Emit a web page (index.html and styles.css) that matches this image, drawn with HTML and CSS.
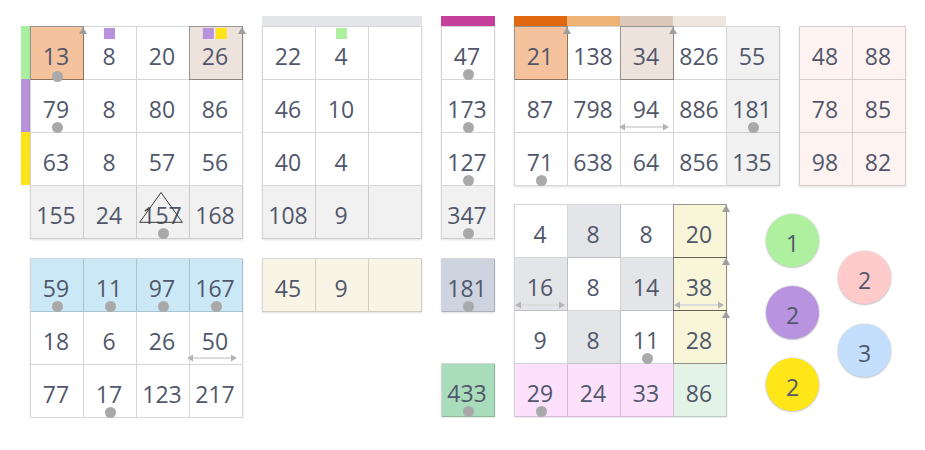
FILE: index.html
```html
<!DOCTYPE html>
<html lang="en">
<head>
<meta charset="utf-8">
<title>Grids</title>
<link rel="stylesheet" href="styles.css">
</head>
<body>
<main class="board">
  <!-- column A -->
  <section class="col">
    <div class="with-strip">
      <div class="strip"><i class="s-green"></i><i class="s-purple"></i><i class="s-yellow"></i></div>
      <div class="grid c4">
        <div class="cell orange hl">13<span class="up"></span><span class="dot low"></span></div>
        <div class="cell">8<span class="tags"><b class="t-purple"></b></span></div>
        <div class="cell">20</div>
        <div class="cell tan hl">26<span class="up"></span><span class="tags"><b class="t-purple"></b><b class="t-yellow"></b></span></div>
        <div class="cell">79<span class="dot"></span></div>
        <div class="cell">8</div>
        <div class="cell">80</div>
        <div class="cell">86</div>
        <div class="cell">63</div>
        <div class="cell">8</div>
        <div class="cell">57</div>
        <div class="cell">56</div>
        <div class="cell total">155</div>
        <div class="cell total">24</div>
        <div class="cell total">157<svg class="warn" viewBox="0 0 44 31" width="44" height="31"><polygon points="22,0.5 0.7,30.3 43.3,30.3" fill="none" stroke="#3a3a3a" stroke-width="1"/></svg><span class="dot"></span></div>
        <div class="cell total">168</div>
      </div>
    </div>
    <div class="grid c4 gap19 indent">
      <div class="cell blue">59<span class="dot"></span></div>
      <div class="cell blue">11<span class="dot"></span></div>
      <div class="cell blue">97<span class="dot"></span></div>
      <div class="cell blue">167<span class="dot"></span></div>
      <div class="cell">18</div>
      <div class="cell">6</div>
      <div class="cell">26</div>
      <div class="cell">50<span class="harr up2"><svg viewBox="0 0 50 8" width="50" height="8"><line x1="5" y1="4" x2="45" y2="4" stroke="#dcdcdc" stroke-width="2"/><polygon points="0,4 6,0.5 6,7.5" fill="#b4b4b4"/><polygon points="50,4 44,0.5 44,7.5" fill="#b4b4b4"/></svg></span></div>
      <div class="cell">77</div>
      <div class="cell">17<span class="dot"></span></div>
      <div class="cell">123</div>
      <div class="cell">217</div>
    </div>
  </section>

  <!-- column B -->
  <section class="col">
    <div class="bar bar-gray w3"></div>
    <div class="grid c3">
      <div class="cell">22</div>
      <div class="cell">4<span class="tags"><b class="t-green"></b></span></div>
      <div class="cell"></div>
      <div class="cell">46</div>
      <div class="cell">10</div>
      <div class="cell"></div>
      <div class="cell">40</div>
      <div class="cell">4</div>
      <div class="cell"></div>
      <div class="cell total">108</div>
      <div class="cell total">9</div>
      <div class="cell total"></div>
    </div>
    <div class="grid c3 gap19">
      <div class="cell beige">45</div>
      <div class="cell beige">9</div>
      <div class="cell beige"></div>
    </div>
  </section>

  <!-- column C -->
  <section class="col">
    <div class="bar bar-magenta w1"></div>
    <div class="grid c1">
      <div class="cell">47<span class="dot"></span></div>
      <div class="cell">173<span class="dot"></span></div>
      <div class="cell">127<span class="dot"></span></div>
      <div class="cell total">347<span class="dot"></span></div>
    </div>
    <div class="grid c1 gap19">
      <div class="cell slate">181<span class="dot"></span></div>
    </div>
    <div class="grid c1 gap51">
      <div class="cell mint">433<span class="dot"></span></div>
    </div>
  </section>

  <!-- column D -->
  <section class="col">
    <div class="bar-row">
      <i class="seg seg-1"></i><i class="seg seg-2"></i><i class="seg seg-3"></i><i class="seg seg-4"></i>
    </div>
    <div class="grid c5">
      <div class="cell orange hl">21<span class="up"></span></div>
      <div class="cell">138</div>
      <div class="cell tan hl">34<span class="up"></span></div>
      <div class="cell">826</div>
      <div class="cell total">55</div>
      <div class="cell">87</div>
      <div class="cell">798</div>
      <div class="cell">94<span class="harr up3"><svg viewBox="0 0 50 8" width="50" height="8"><line x1="5" y1="4" x2="45" y2="4" stroke="#dcdcdc" stroke-width="2"/><polygon points="0,4 6,0.5 6,7.5" fill="#b4b4b4"/><polygon points="50,4 44,0.5 44,7.5" fill="#b4b4b4"/></svg></span></div>
      <div class="cell">886</div>
      <div class="cell total">181<span class="dot"></span></div>
      <div class="cell">71<span class="dot"></span></div>
      <div class="cell">638</div>
      <div class="cell">64</div>
      <div class="cell">856</div>
      <div class="cell total">135</div>
    </div>
    <div class="grid c4 gap18">
      <div class="cell">4</div>
      <div class="cell shade">8</div>
      <div class="cell">8</div>
      <div class="cell cream hl">20<span class="up"></span></div>
      <div class="cell shade">16<span class="harr"><svg viewBox="0 0 50 8" width="50" height="8"><line x1="5" y1="4" x2="45" y2="4" stroke="#dcdcdc" stroke-width="2"/><polygon points="0,4 6,0.5 6,7.5" fill="#b4b4b4"/><polygon points="50,4 44,0.5 44,7.5" fill="#b4b4b4"/></svg></span></div>
      <div class="cell">8</div>
      <div class="cell shade">14</div>
      <div class="cell cream hl">38<span class="up"></span><span class="harr"><svg viewBox="0 0 50 8" width="50" height="8"><line x1="5" y1="4" x2="45" y2="4" stroke="#dcdcdc" stroke-width="2"/><polygon points="0,4 6,0.5 6,7.5" fill="#b4b4b4"/><polygon points="50,4 44,0.5 44,7.5" fill="#b4b4b4"/></svg></span></div>
      <div class="cell">9</div>
      <div class="cell shade">8</div>
      <div class="cell">11<span class="dot"></span></div>
      <div class="cell cream hl">28<span class="up"></span></div>
      <div class="cell pink">29<span class="dot"></span><span class="foot"></span></div>
      <div class="cell pink">24<span class="foot"></span></div>
      <div class="cell pink">33<span class="foot"></span></div>
      <div class="cell sage">86</div>
    </div>
  </section>

  <!-- column E -->
  <section class="col">
    <div class="grid c2 rosy top10">
      <div class="cell">48</div>
      <div class="cell">88</div>
      <div class="cell">78</div>
      <div class="cell">85</div>
      <div class="cell">98</div>
      <div class="cell">82</div>
    </div>
    <div class="tray">
      <div class="lane">
        <div class="disc d-green">1</div>
        <div class="disc d-purple">2</div>
        <div class="disc d-yellow">2</div>
      </div>
      <div class="lane lane-r">
        <div class="disc d-pink">2</div>
        <div class="disc d-blue">3</div>
      </div>
    </div>
  </section>
</main>
</body>
</html>
```

FILE: styles.css
```css
html, body {
  margin: 0;
  background: #ffffff;
}

body {
  font-family: "Open Sans", "Noto Sans", "DejaVu Sans", sans-serif;
  font-weight: 400;
  color: #50576a;
}

.board {
  display: flex;
  align-items: flex-start;
  gap: 19px;
  padding: 16px 0 0 21px;
}

.col {
  display: flex;
  flex-direction: column;
  align-items: flex-start;
}

.with-strip {
  display: flex;
  align-items: flex-start;
  margin-top: 10px;
}

.strip {
  width: 9px;
  display: flex;
  flex-direction: column;
}

.strip i {
  display: block;
  height: 53px;
}

.s-green { background: #a9ef9f; }
.s-purple { background: #b992dd; }
.s-yellow { background: #ffe41a; }

.indent { margin-left: 9px; }
.top10 { margin-top: 10px; }
.gap19 { margin-top: 19px; }
.gap18 { margin-top: 18px; }
.gap51 { margin-top: 51px; }

/* header bars */
.bar { height: 10px; }
.bar.w3 { width: 160px; }
.bar.w1 { width: 54px; }
.bar-gray { background: #e4e5e9; }
.bar-magenta { background: #c6409b; }

.bar-row {
  display: flex;
  height: 10px;
}

.seg {
  display: block;
  width: 53px;
  height: 10px;
}

.seg-1 { background: #e2680f; }
.seg-2 { background: #efb275; }
.seg-3 { background: #dcc9bc; }
.seg-4 { background: #efe6de; }

/* grids */
.grid {
  display: grid;
  grid-auto-rows: 53px;
  border-left: 1px solid rgba(0, 0, 0, 0.16);
  border-top: 1px solid rgba(0, 0, 0, 0.16);
  background: #ffffff;
  box-shadow: 0 1px 2px rgba(0, 0, 0, 0.12);
}

.c1 { grid-template-columns: 53px; }
.c2 { grid-template-columns: repeat(2, 53px); }
.c3 { grid-template-columns: repeat(3, 53px); }
.c4 { grid-template-columns: repeat(4, 53px); }
.c5 { grid-template-columns: repeat(5, 53px); }

.cell {
  position: relative;
  box-sizing: border-box;
  display: flex;
  align-items: center;
  justify-content: center;
  padding-top: 5px;
  padding-right: 2px;
  border-right: 1px solid rgba(0, 0, 0, 0.16);
  border-bottom: 1px solid rgba(0, 0, 0, 0.16);
  font-size: 23px;
  line-height: normal;
}

.orange { background: #f4c29c; }
.tan { background: #eee3dc; }
.total { background: #f1f1f1; }
.blue { background: #cbe8f6; }
.beige { background: #f8f5e7; }
.slate { background: #cdd3df; }
.mint { background: #a9dcbb; }
.shade { background: #e4e5e9; }
.cream { background: #f8f5d9; }
.pink { background: #fde0fc; }
.sage { background: #e3f3e7; }
.rosy { background: #fff3f2; }

/* highlighted frame */
.hl::before {
  content: "";
  position: absolute;
  top: -1px;
  left: -1px;
  right: -1px;
  bottom: -1px;
  border: 1px solid rgba(0, 0, 0, 0.3);
  z-index: 1;
  pointer-events: none;
}

/* up arrow at top right corner */
.up {
  position: absolute;
  top: 0;
  right: -4px;
  width: 0;
  height: 0;
  border-left: 4px solid transparent;
  border-right: 4px solid transparent;
  border-bottom: 7px solid #9d9d9d;
  z-index: 3;
}

/* grey dot */
.dot {
  position: absolute;
  left: 50%;
  bottom: -1px;
  width: 11px;
  height: 11px;
  margin-left: -5.5px;
  border-radius: 50%;
  background: #a9a9a9;
  z-index: 3;
}

.dot.low { bottom: -3px; }

/* small coloured tags */
.tags {
  position: absolute;
  top: 1px;
  left: 50%;
  transform: translateX(-55%);
  display: flex;
  gap: 2px;
}

.tags b {
  display: block;
  width: 11px;
  height: 11px;
}

.t-purple { background: #b992dd; }
.t-yellow { background: #ffe41a; }
.t-green { background: #aef0a0; }

/* double-headed arrow */
.harr {
  position: absolute;
  left: 0;
  bottom: 1px;
  width: 50px;
  height: 8px;
  z-index: 3;
}

.harr svg { display: block; }
.harr.up2 { left: -3px; bottom: 2px; }
.harr.up3 { left: -2px; bottom: 1px; }

/* warning outline */
.warn {
  position: absolute;
  left: 2px;
  top: 6px;
  z-index: 3;
}

/* foot triangles under grid */
.foot {
  position: absolute;
  left: 50%;
  bottom: -9px;
  margin-left: -5px;
  width: 0;
  height: 0;
  border-left: 5px solid transparent;
  border-right: 5px solid transparent;
  border-bottom: 6px solid #a9a9a9;
  z-index: 3;
}

/* circles tray */
.tray {
  display: flex;
  gap: 19px;
  margin: 28px 0 0 -33px;
}

.lane {
  display: flex;
  flex-direction: column;
  gap: 19px;
}

.lane-r {
  margin-top: 37px;
  gap: 20px;
}

.disc {
  box-sizing: border-box;
  width: 53px;
  height: 53px;
  border-radius: 50%;
  display: flex;
  align-items: center;
  justify-content: center;
  padding-top: 4px;
  font-size: 23px;
  box-shadow: 0 0 0 1px rgba(0, 0, 0, 0.07), 0 1px 2px rgba(0, 0, 0, 0.18);
}

.d-green { background: #aef0a0; }
.d-purple { background: #b993df; }
.d-yellow { background: #ffe619; }
.d-pink { background: #ffcaca; }
.d-blue { background: #c4dffd; }
```
